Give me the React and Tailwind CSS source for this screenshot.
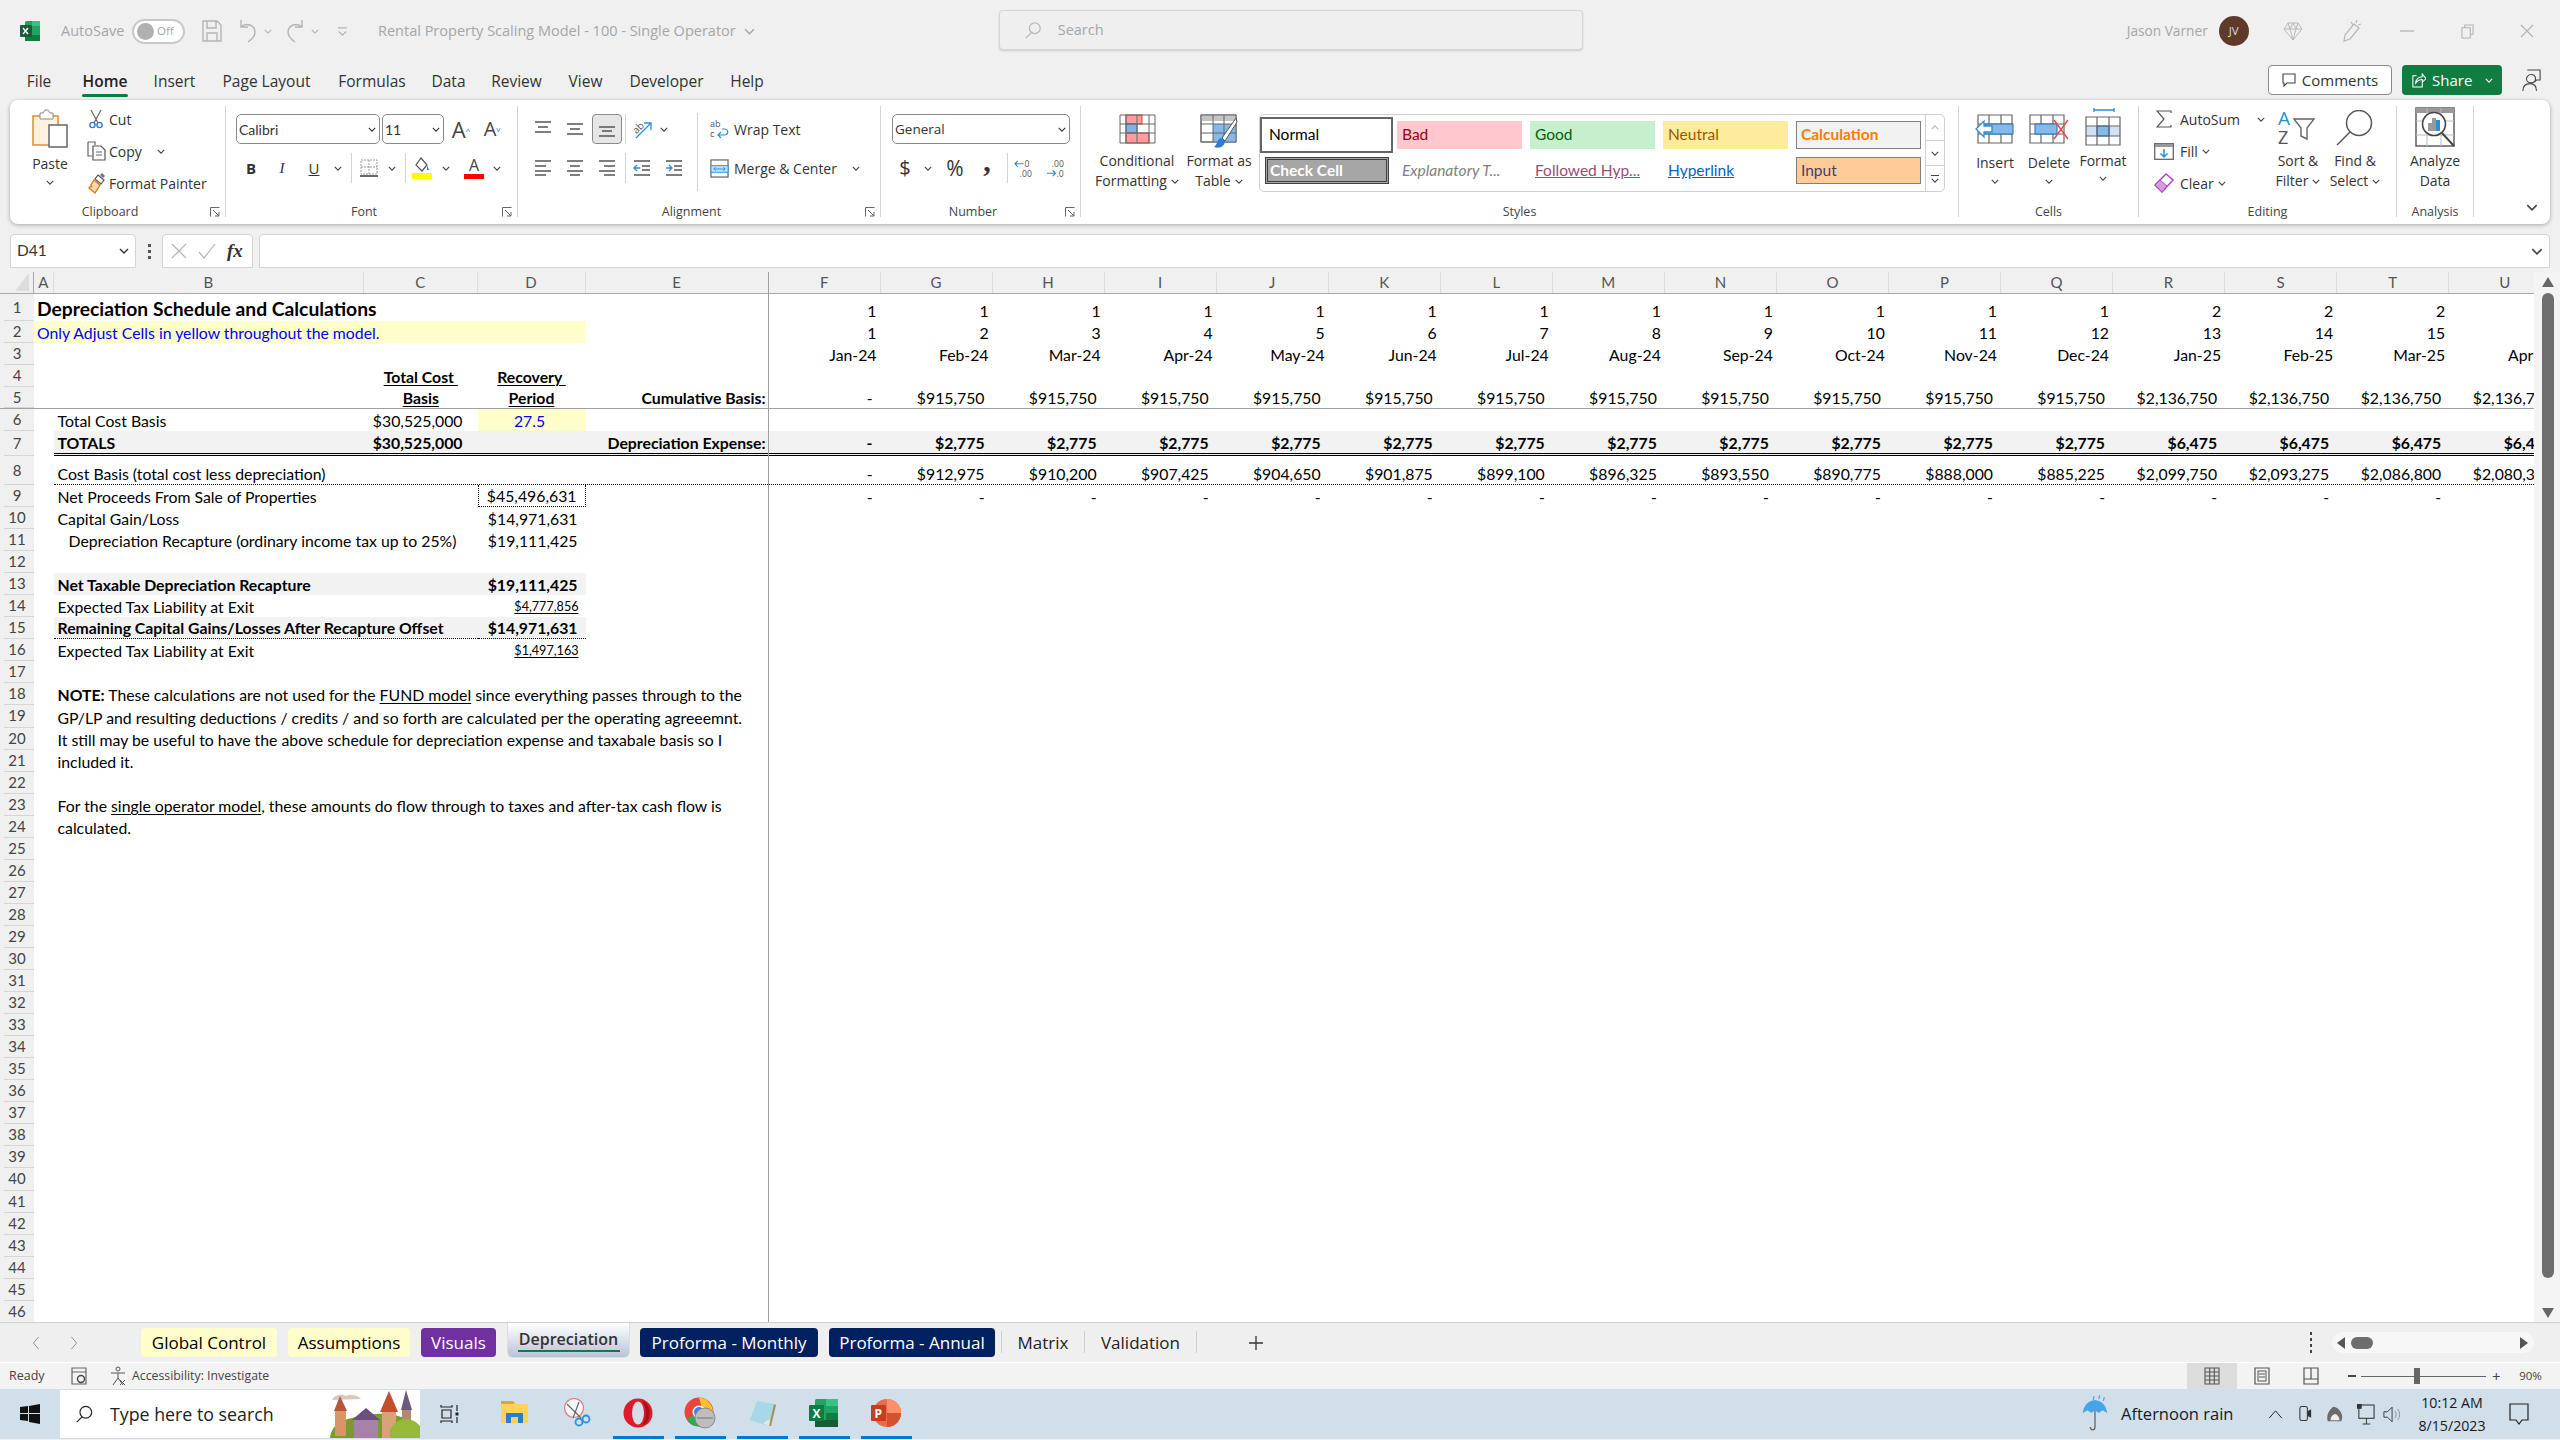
import React from "react";

const Chev = ({ c = "#444", className = "" }) => (
  <svg viewBox="0 0 10 6" className={`w-[8px] h-[5px] shrink-0 ${className}`}><path d="M1 1l4 4 4-4" fill="none" stroke={c} strokeWidth="1.4" /></svg>
);
const Launcher = () => (
  <svg viewBox="0 0 10 10" className="w-[10px] h-[10px] mr-[5px] shrink-0"><path d="M.5 9.5V.5h9M3 3l6 6M9 5v4H5" fill="none" stroke="#666" strokeWidth="1" /></svg>
);
const VSep = ({ className = "h-[30px]" }) => <div className={`w-px bg-[#d4d4d4] shrink-0 ${className}`} />;

const IPaste = () => (
  <svg viewBox="0 0 36 40" className="w-[36px] h-[40px]">
    <rect x="1" y="7" width="25" height="29" fill="#fff3dd" stroke="#e8912d" strokeWidth="1.6" />
    <path d="M8 7V4h3l2-3h3l2 3h3v6H8z" fill="#fff" stroke="#888" />
    <rect x="17" y="16" width="18" height="22" fill="#fff" stroke="#666" strokeWidth="1.5" />
  </svg>
);
const ICut = () => (
  <svg viewBox="0 0 16 20" className="w-[16px] h-[20px]">
    <path d="M3 1l7 13M13 1L6 14" stroke="#666" strokeWidth="1.2" fill="none" />
    <circle cx="4.5" cy="16" r="2.6" fill="none" stroke="#2b7cd3" strokeWidth="1.4" />
    <circle cx="11.5" cy="16" r="2.6" fill="none" stroke="#2b7cd3" strokeWidth="1.4" />
  </svg>
);
const ICopy = () => (
  <svg viewBox="0 0 20 20" className="w-[20px] h-[20px]">
    <path d="M1 1h7v3M1 1v14h4" fill="none" stroke="#666" strokeWidth="1.2" />
    <path d="M6 5h8l4 4v10H6z" fill="#fff" stroke="#555" strokeWidth="1.2" />
    <path d="M9 11h6M9 14h6" stroke="#666" />
  </svg>
);
const IPainter = () => (
  <svg viewBox="0 0 20 22" className="w-[20px] h-[22px]">
    <path d="M11 3l6 5-3 4-6-5z" fill="#fff" stroke="#555" strokeWidth="1.2" />
    <path d="M15 1l3 3-2 2-3-3z" fill="#777" />
    <path d="M7 8l6 5-5 8-6-5 2-2 1 1-1-2z" fill="#fbd9b0" stroke="#e07a1e" strokeWidth="1.4" />
  </svg>
);
const ICond = () => (
  <svg viewBox="0 0 37 30" className="w-[37px] h-[30px]">
    <rect x="1" y="1" width="35" height="28" fill="#fff" />
    <rect x="7" y="1" width="16" height="9" fill="#ff9c9c" stroke="#d24242" />
    <rect x="7" y="10" width="11" height="9" fill="#7fb4e6" stroke="#2d7ac4" />
    <rect x="7" y="19" width="23" height="10" fill="#ff9c9c" stroke="#d24242" />
    <path d="M1 1h35v28H1zM7 1v28M18 1v28M30 1v28M1 10h35M1 19h35" fill="none" stroke="#666" strokeWidth="1" />
  </svg>
);
const ITable = () => (
  <svg viewBox="0 0 38 36" className="w-[38px] h-[36px]">
    <rect x="1" y="1" width="35" height="27" fill="#fff" stroke="#666" />
    <rect x="1" y="1" width="35" height="6" fill="#c4c4c4" />
    <rect x="13" y="10" width="23" height="18" fill="#84b9ea" />
    <path d="M1 1h35v27H1zM13 1v27M24 1v27M1 10h35M1 19h35" fill="none" stroke="#666" />
    <path d="M36 4L22 24l3 3L37 8z" fill="#fff" stroke="#555" />
    <path d="M21 24c-4 1-3 6-7 9 6 2 11-1 11-6z" fill="#2b7cd3" />
  </svg>
);
const IInsert = () => (
  <svg viewBox="0 0 40 30" className="w-[40px] h-[30px]">
    <path d="M3 1h34v28H3zM14 1v28M26 1v28M3 10h34M3 20h34" fill="none" stroke="#666" strokeWidth="1.2" />
    <rect x="10" y="10" width="28" height="10" fill="#84b9ea" stroke="#1f6fba" />
    <path d="M1 15l8-8v5h8v6H9v5z" fill="#fff" stroke="#2b8fd6" strokeWidth="1.3" />
  </svg>
);
const IDelete = () => (
  <svg viewBox="0 0 42 30" className="w-[42px] h-[30px]">
    <path d="M2 1h34v28H2zM13 1v28M25 1v28M2 10h34M2 20h34" fill="none" stroke="#666" strokeWidth="1.2" />
    <rect x="7" y="10" width="22" height="10" fill="#84b9ea" stroke="#1f6fba" />
    <path d="M26 6l14 19M40 6L26 25" stroke="#e84b4b" strokeWidth="1.5" />
  </svg>
);
const IFormat = () => (
  <svg viewBox="0 0 38 38" className="w-[38px] h-[38px]">
    <path d="M10 2h20M10 0v4M30 0v4" stroke="#2b8fd6" strokeWidth="1.3" />
    <rect x="2" y="18" width="34" height="10" fill="#84b9ea66" />
    <rect x="13" y="18" width="12" height="10" fill="#84b9ea" stroke="#1f6fba" />
    <path d="M2 9h34v28H2zM13 9v28M25 9v28M2 18h34M2 28h34" fill="none" stroke="#666" strokeWidth="1.2" />
  </svg>
);
const ISigma = () => (
  <svg viewBox="0 0 16 18" className="w-[16px] h-[18px]"><path d="M15 3V1H1l7 8-7 8h14v-2" fill="none" stroke="#555" strokeWidth="1.2" /></svg>
);
const IFill = () => (
  <svg viewBox="0 0 20 17" className="w-[20px] h-[17px]">
    <rect x=".7" y=".7" width="18.6" height="15.6" fill="#fff" stroke="#666" strokeWidth="1.3" />
    <rect x="1" y="1" width="18" height="3" fill="#999" />
    <path d="M10 6v8M6.5 10.5L10 14l3.5-3.5" fill="none" stroke="#2b8fd6" strokeWidth="1.5" />
  </svg>
);
const IClear = () => (
  <svg viewBox="0 0 20 20" className="w-[20px] h-[20px]">
    <path d="M1 12L12 1l7 6L8 19z" fill="#fff" stroke="#a64bc0" strokeWidth="1.5" />
    <path d="M1 12l5-5 7 6-5 6z" fill="#d29adf" stroke="#a64bc0" strokeWidth="1" />
  </svg>
);
const ISort = () => (
  <svg viewBox="0 0 42 40" className="w-[42px] h-[40px]">
    <text x="1" y="16" fontSize="19" fill="#2b8fd6" fontFamily="Open Sans">A</text>
    <text x="1" y="35" fontSize="18" fill="#555" fontFamily="Open Sans">Z</text>
    <path d="M17 10h20l-7 9v11l-6-3v-8z" fill="#fff" stroke="#666" strokeWidth="1.4" />
  </svg>
);
const IFind = () => (
  <svg viewBox="0 0 40 38" className="w-[40px] h-[38px]">
    <circle cx="24" cy="13" r="12.5" fill="none" stroke="#555" strokeWidth="1.5" />
    <path d="M15 22L2 35" stroke="#555" strokeWidth="1.5" />
  </svg>
);
const IAnalyze = () => (
  <svg viewBox="0 0 44 44" className="w-[44px] h-[44px]">
    <rect x="1" y="1" width="38" height="38" fill="#fff" stroke="#555" strokeWidth="1.4" />
    <rect x="1" y="1" width="38" height="5" fill="#999" />
    <path d="M1 14h38M1 28h38M12 1v38M26 1v38" stroke="#bbb" />
    <circle cx="19" cy="17" r="11.5" fill="#fff" stroke="#444" strokeWidth="1.6" />
    <rect x="13" y="16" width="4" height="8" fill="#999" />
    <rect x="17" y="11" width="4" height="13" fill="#999" />
    <rect x="21" y="13" width="4" height="11" fill="#2b8fd6" />
    <path d="M27 26l12 13" stroke="#444" strokeWidth="2" />
  </svg>
);

function Group({ w, label, launcher, children }) {
  return (
    <div className={`flex shrink-0 ${w}`}>
      <div className="flex-1 min-w-0 flex flex-col">
        <div className="h-[98px] flex">{children}</div>
        <div className="h-[16px] flex items-center text-[#444] text-[12.5px] leading-none">
          <div className="flex-1 text-center">{label}</div>
          {launcher && <Launcher />}
        </div>
      </div>
      <VSep className="h-[111px]" />
    </div>
  );
}

const SmallRow = ({ icon, text, chev, cw = "w-[22px]", gap = "ml-[6px]" }) => (
  <div className="h-[28px] flex items-center text-[#333] text-[14px] whitespace-nowrap">
    <div className={`${cw} flex justify-start shrink-0`}>{icon}</div>
    <span>{text}</span>
    {chev && <Chev className={gap} />}
  </div>
);

const LargeBtn = ({ w, icon, lines, chevLast, box = "h-[45px] pt-[8px]" }) => (
  <div className={`${w} shrink-0 flex flex-col items-center text-[#333] text-[14px] leading-[20px] whitespace-nowrap`}>
    <div className={`${box} flex items-start justify-center`}>{icon}</div>
    {lines.map((l, i) => (
      <div key={i} className="flex items-center">
        {l}
        {chevLast && i === lines.length - 1 && <Chev className="ml-[4px] w-[7px]" />}
      </div>
    ))}
  </div>
);

const CellBtn = ({ icon, label, box = "h-[47px] pt-[8px]", top = "mt-[6px]" }) => (
  <div className="w-[54px] shrink-0 flex flex-col items-center text-[#333] text-[14px] leading-[20px]">
    <div className={`${box} flex items-start justify-center`}>{icon}</div>
    <span>{label}</span>
    <Chev className={top} />
  </div>
);

const Combo = ({ w, text, cal }) => (
  <div className={`${w} h-[30px] border border-[#8a8a8a] rounded-[5px] bg-white flex items-center justify-between pl-[2px] pr-[3px] shrink-0 text-[#333] ${cal ? "font-['Lato',sans-serif] text-[14px]" : "text-[13.5px]"}`}>
    <span>{text}</span><Chev c="#333" />
  </div>
);

function TitleBar() {
  return (
    <div className="h-[62px] flex items-center text-[#a6a6a6] text-[14.5px] shrink-0">
      <svg viewBox="0 0 20 20" className="w-[20px] h-[20px] ml-[20px] shrink-0">
        <rect x="5" y="0" width="15" height="20" rx="1.5" fill="#21a366" />
        <rect x="12" y="0" width="8" height="5" fill="#33c481" />
        <rect x="5" y="14" width="15" height="6" fill="#107c41" />
        <rect x="0" y="4" width="12" height="12" rx="1" fill="#185c37" />
        <path d="M3 7l5 6M8 7l-5 6" stroke="#fff" strokeWidth="1.4" />
      </svg>
      <span className="ml-[21px] w-[71px] whitespace-nowrap">AutoSave</span>
      <div className="w-[53px] h-[25px] rounded-full border-2 border-[#c8c8c8] flex items-center pl-[3px] gap-[3px] bg-white shrink-0">
        <div className="w-[17px] h-[17px] rounded-full bg-[#b0b0b0]" />
        <span className="text-[11.5px] leading-none">Off</span>
      </div>
      <svg viewBox="0 0 20 22" className="w-[20px] h-[22px] ml-[17px] shrink-0"><path d="M1 1h14l4 4v16H1zM5 1v7h9V1M5 21v-8h10v8" fill="none" stroke="#b4b4b4" strokeWidth="1.4" /></svg>
      <svg viewBox="0 0 20 24" className="w-[20px] h-[24px] ml-[16px] shrink-0"><path d="M3 1v7h7M3 8c5-5 14-2 14 5 0 5-4 8-7 10" fill="none" stroke="#b4b4b4" strokeWidth="1.4" /></svg>
      <Chev c="#b4b4b4" className="ml-[6px]" />
      <svg viewBox="0 0 20 24" className="w-[20px] h-[24px] ml-[13px] shrink-0"><path d="M17 1v7h-7M17 8C12 3 3 6 3 13c0 5 4 8 7 10" fill="none" stroke="#b4b4b4" strokeWidth="1.4" /></svg>
      <Chev c="#b4b4b4" className="ml-[6px]" />
      <svg viewBox="0 0 12 12" className="w-[11px] h-[11px] ml-[18px] shrink-0"><path d="M1 2h10M2 6l4 4 4-4" fill="none" stroke="#b4b4b4" strokeWidth="1.2" /></svg>
      <span className="ml-[30px] whitespace-nowrap">Rental Property Scaling Model - 100 - Single Operator</span>
      <Chev c="#a6a6a6" className="ml-[8px] w-[11px] h-[7px]" />
      <div className="ml-[244px] w-[584px] h-[40px] -mt-[2px] rounded-[4px] border border-[#d6d6d6] shadow-[0_1px_2px_rgba(0,0,0,.15)] bg-[#efefef] flex items-center shrink-0">
        <svg viewBox="0 0 20 20" className="w-[18px] h-[18px] ml-[24px]"><circle cx="12" cy="8" r="6" fill="none" stroke="#b8b8b8" strokeWidth="1.4" /><path d="M8 13l-6 6" stroke="#b8b8b8" strokeWidth="1.4" /></svg>
        <span className="ml-[16px]">Search</span>
      </div>
      <span className="ml-[544px] w-[100px] whitespace-nowrap text-[13.7px]">Jason Varner</span>
      <div className="ml-[-8px] w-[30px] h-[30px] rounded-full bg-[#5f3a2b] text-[#ddd] text-[11.5px] flex items-center justify-center shrink-0">JV</div>
      <svg viewBox="0 0 20 20" className="w-[20px] h-[20px] ml-[34px] shrink-0"><path d="M5 2h10l4 6-9 11L1 8zM1 8h18M7 8l3 11 3-11M5 2l2 6 3-6 3 6 2-6" fill="none" stroke="#b8b8b8" strokeWidth="1" /></svg>
      <svg viewBox="0 0 20 24" className="w-[20px] h-[24px] ml-[39px] shrink-0"><path d="M12 5L3 16l-1 6 6-2 9-11zM9 3l2 3M15 1l-1 3M19 5l-3 1" fill="none" stroke="#b8b8b8" strokeWidth="1.2" /></svg>
      <svg viewBox="0 0 14 2" className="w-[14px] h-[2px] ml-[38px] shrink-0"><path d="M0 1h14" stroke="#b4b4b4" strokeWidth="1.3" /></svg>
      <svg viewBox="0 0 14 16" className="w-[13px] h-[15px] ml-[47px] shrink-0"><path d="M1 4h9v11H1zM4 4V1h9v10h-3" fill="none" stroke="#b4b4b4" strokeWidth="1.2" /></svg>
      <svg viewBox="0 0 14 14" className="w-[14px] h-[14px] ml-[46px] shrink-0"><path d="M1 1l12 12M13 1L1 13" stroke="#b4b4b4" strokeWidth="1.2" /></svg>
    </div>
  );
}

function TabRow() {
  const tabs = [["File", "w-[60px]", ""], ["Home", "w-[72px]", "a"], ["Insert", "w-[67px]", ""], ["Page Layout", "w-[117px]", ""], ["Formulas", "w-[94px]", ""], ["Data", "w-[59px]", ""], ["Review", "w-[77px]", ""], ["View", "w-[61px]", ""], ["Developer", "w-[101px]", ""], ["Help", "w-[60px]", ""]];
  return (
    <div className="h-[38px] flex text-[#333] text-[15.5px] shrink-0">
      <div className="ml-[9px] flex">
        {tabs.map(([t, w, a]) => (
          <div key={t} className={`${w} flex flex-col items-center justify-start pt-[8px] shrink-0 ${a ? "font-semibold text-[#222]" : ""}`}>
            <span className="leading-[22px]">{t}</span>
            {a && <div className="w-[46px] h-[3px] rounded-full bg-[#107c41] mt-[2px]" />}
          </div>
        ))}
      </div>
      <div className="flex-1" />
      <div className="w-[124px] h-[30px] mt-[3px] border border-[#8a8a8a] rounded-[4px] bg-white flex items-center justify-center gap-[6px] text-[15px] shrink-0">
        <svg viewBox="0 0 14 14" className="w-[14px] h-[14px]"><path d="M1 1h12v9H5l-3 3v-3H1z" fill="none" stroke="#444" strokeWidth="1.1" /></svg>Comments
      </div>
      <div className="w-[100px] h-[30px] mt-[3px] ml-[10px] rounded-[4px] bg-[#107c41] text-white flex items-center pl-[9px] gap-[6px] text-[15px] font-medium shrink-0">
        <svg viewBox="0 0 16 16" className="w-[15px] h-[15px]"><path d="M6 3H2v12h10v-5M5 11c0-4 3-7 7-7V1l4 5-4 4V7c-3 0-5 1-7 4z" fill="none" stroke="#fff" strokeWidth="1.1" /></svg>
        <span>Share</span><Chev c="#fff" className="ml-[7px] w-[7px]" />
      </div>
      <svg viewBox="0 0 22 26" className="w-[20px] h-[24px] mt-[6px] ml-[19px] mr-[19px] shrink-0"><path d="M7 2h14v11h-4l-2 2M11 7c3 0 5 2 5 5s-2 4-5 4-5-2-5-4 2-5 5-5zM2 25c0-5 3-8 8-8s7 3 7 8" fill="none" stroke="#444" strokeWidth="1.2" /></svg>
    </div>
  );
}

const Al = ({ d }) => <svg viewBox="0 0 18 18" className="w-[18px] h-[18px]"><path d={d} stroke="#555" strokeWidth="1.5" fill="none" /></svg>;

function Ribbon() {
  return (
    <div className="mx-[10px] h-[124px] shrink-0 bg-white rounded-[8px] shadow-[0_1px_4px_rgba(0,0,0,.3)] pt-[6px] flex text-[#333]">
      <Group w="w-[216px]" label="Clipboard" launcher>
        <div className="ml-[3px] w-[74px] flex flex-col items-center text-[14px] pt-[3px] shrink-0">
          <IPaste />
          <span className="mt-[5px] leading-[20px]">Paste</span>
          <Chev className="mt-[6px]" />
        </div>
        <div className="flex flex-col gap-[4px] -mt-[1px]">
          <SmallRow icon={<div className="pl-[1px]"><ICut /></div>} text="Cut" />
          <SmallRow icon={<ICopy />} text="Copy" chev gap="ml-[15px]" />
          <SmallRow icon={<IPainter />} text="Format Painter" />
        </div>
      </Group>
      <Group w="w-[292px]" label="Font" launcher>
        <div className="flex flex-col pl-[10px] pt-[8px]">
          <div className="flex items-center">
            <Combo w="w-[144px]" text="Calibri" cal />
            <div className="w-[2px]" />
            <Combo w="w-[62px]" text="11" cal />
            <span className="w-[34px] text-center text-[22px] leading-none text-[#444]">A<sup className="text-[8px] text-[#2b7cd3]">^</sup></span>
            <span className="w-[28px] text-center text-[20px] leading-none text-[#444]">A<sup className="text-[8px] text-[#2b7cd3]">v</sup></span>
          </div>
          <div className="flex items-center h-[30px] mt-[9px]">
            <span className="w-[30px] text-center font-bold text-[15px]">B</span>
            <span className="w-[32px] text-center italic font-['Liberation_Serif',serif] text-[15px]">I</span>
            <span className="w-[32px] text-center underline text-[15px]">U</span>
            <div className="w-[16px] flex justify-center"><Chev /></div>
            <div className="w-[5px]" /><VSep />
            <div className="w-[34px] flex justify-center">
              <svg viewBox="0 0 18 18" className="w-[18px] h-[18px]"><path d="M1 1h16v14H1zM9 1v14M1 8h16" fill="none" stroke="#999" strokeDasharray="2 1" /><path d="M0 17h18" stroke="#444" strokeWidth="1.6" /></svg>
            </div>
            <div className="w-[12px] flex justify-center"><Chev /></div>
            <div className="w-[7px]" /><VSep />
            <div className="w-[32px] flex justify-center">
              <svg viewBox="0 0 20 22" className="w-[20px] h-[22px]"><path d="M9 1l6 7-5 6-6-6z" fill="#fff" stroke="#555" strokeWidth="1.2" /><path d="M15 8l2 5h-2z" fill="#2b7cd3" /><rect x="0" y="16" width="20" height="6" fill="#ffff00" /></svg>
            </div>
            <div className="w-[16px] flex justify-center"><Chev /></div>
            <div className="w-[40px] flex justify-center">
              <div className="flex flex-col items-center w-[20px] leading-none text-[16px] text-[#444]">A<div className="w-[20px] h-[5px] bg-[#ff0000] mt-[1px]" /></div>
            </div>
            <div className="w-[6px] flex justify-center"><Chev /></div>
          </div>
        </div>
      </Group>
      <Group w="w-[363px]" label="Alignment" launcher>
        <div className="w-[179px] flex flex-col pt-[8px] shrink-0">
          <div className="h-[30px] flex items-center pl-[9px]">
            <div className="w-[32px] flex justify-center"><Al d="M1 2h16M4 7h10M1 12h16" /></div>
            <div className="w-[32px] flex justify-center"><Al d="M1 4h16M4 9h10M1 14h16" /></div>
            <div className="w-[30px] ml-[1px] h-[30px] bg-[#e6e6e6] border border-[#8a8a8a] rounded-[4px] flex items-center justify-center"><Al d="M1 7h16M4 11h10M1 16h16" /></div>
            <VSep className="h-[30px] ml-[3px]" />
            <div className="w-[32px] ml-[1px] flex justify-center">
              <svg viewBox="0 0 22 22" className="w-[22px] h-[22px]"><text x="1" y="12" fontSize="10" fill="#555" fontFamily="Open Sans" transform="rotate(-45 8 10)">ab</text><path d="M4 20L18 6M12 5h7v7" stroke="#2b8fd6" strokeWidth="1.3" fill="none" /></svg>
            </div>
            <div className="w-[10px] flex justify-center"><Chev /></div>
          </div>
          <div className="h-[30px] mt-[9px] flex items-center pl-[9px]">
            <div className="w-[32px] flex justify-center"><Al d="M1 2h16M1 7h11M1 12h16M1 16h11" /></div>
            <div className="w-[32px] flex justify-center"><Al d="M1 2h16M4 7h10M1 12h16M4 16h10" /></div>
            <div className="w-[32px] flex justify-center"><Al d="M1 2h16M6 7h11M1 12h16M6 16h11" /></div>
            <VSep className="h-[30px] ml-[2px]" />
            <div className="w-[32px] flex justify-center">
              <svg viewBox="0 0 18 18" className="w-[18px] h-[18px]"><path d="M1 2h16M9 7h8M9 11h8M1 16h16" stroke="#555" strokeWidth="1.3" /><path d="M1 9h6M4 6L1 9l3 3" stroke="#2b8fd6" strokeWidth="1.3" fill="none" /></svg>
            </div>
            <div className="w-[32px] flex justify-center">
              <svg viewBox="0 0 18 18" className="w-[18px] h-[18px]"><path d="M1 2h16M9 7h8M9 11h8M1 16h16" stroke="#555" strokeWidth="1.3" /><path d="M1 9h6M4 6l3 3-3 3" stroke="#2b8fd6" strokeWidth="1.3" fill="none" /></svg>
            </div>
          </div>
        </div>
        <VSep className="h-[78px] mt-[7px]" />
        <div className="flex flex-col pt-[8px] text-[14px] whitespace-nowrap">
          <div className="h-[30px] flex items-center pl-[12px]">
            <div className="w-[24px] flex justify-start">
              <svg viewBox="0 0 20 20" className="w-[20px] h-[20px]"><text x="0" y="8" fontSize="9" fill="#555" fontFamily="Open Sans">ab</text><text x="0" y="18" fontSize="9" fill="#555" fontFamily="Open Sans">c</text><path d="M9 16h5c5 0 5-6 0-6h-2M11 13l-3 3 3 3" fill="none" stroke="#2b8fd6" strokeWidth="1.2" /></svg>
            </div>
            <span>Wrap Text</span>
          </div>
          <div className="h-[30px] mt-[9px] flex items-center pl-[12px]">
            <div className="w-[24px] flex justify-start">
              <svg viewBox="0 0 20 20" className="w-[19px] h-[19px]"><rect x="1" y="1" width="18" height="18" fill="#fff" stroke="#666" strokeWidth="1.3" /><rect x="1" y="7" width="18" height="7" fill="#bfe0f7" stroke="#2b8fd6" /><path d="M4 10.5h12M6 8.5l-2 2 2 2M14 8.5l2 2-2 2" fill="none" stroke="#2b8fd6" /></svg>
            </div>
            <span>Merge &amp; Center</span>
            <Chev className="ml-[15px]" />
          </div>
        </div>
      </Group>
      <Group w="w-[200px]" label="Number" launcher>
        <div className="flex flex-col pl-[11px] pt-[8px]">
          <Combo w="w-[178px]" text="General" />
          <div className="flex items-center h-[30px] mt-[9px]">
            <span className="w-[26px] text-center text-[20px] leading-none">$</span>
            <div className="w-[24px] flex justify-center -ml-[2px]"><Chev /></div>
            <span className="w-[30px] text-center text-[21px] leading-none">%</span>
            <span className="w-[34px] text-center text-[30px] font-bold font-['Liberation_Serif',serif] leading-none -mt-[14px]">,</span>
            <div className="w-[3px]" /><VSep />
            <div className="w-[32px] flex justify-center">
              <svg viewBox="0 0 22 22" className="w-[21px] h-[21px]"><text x="11" y="9" fontSize="9" fill="#555" fontFamily="Open Sans">0</text><text x="6" y="20" fontSize="9" fill="#555" fontFamily="Open Sans">.00</text><path d="M1 6h9M4 3L1 6l3 3" stroke="#2b8fd6" fill="none" strokeWidth="1.2" /></svg>
            </div>
            <div className="w-[32px] flex justify-center">
              <svg viewBox="0 0 22 22" className="w-[21px] h-[21px]"><text x="6" y="9" fontSize="9" fill="#555" fontFamily="Open Sans">.00</text><text x="11" y="20" fontSize="9" fill="#555" fontFamily="Open Sans">.0</text><path d="M1 16h9M7 13l3 3-3 3" stroke="#2b8fd6" fill="none" strokeWidth="1.2" /></svg>
            </div>
          </div>
        </div>
      </Group>
      <Group w="w-[878px]" label="Styles">
        <div className="flex ml-[14px]">
          <LargeBtn w="w-[84px]" icon={<ICond />} lines={["Conditional", "Formatting"]} chevLast />
          <LargeBtn w="w-[80px]" icon={<ITable />} lines={["Format as", "Table"]} chevLast />
        </div>
        <div className="w-[686px] h-[78px] mt-[8px] border border-[#d0d0d0] rounded-[5px] flex shrink-0 font-['Lato',sans-serif] text-[15.5px]">
          <div className="flex-1 min-w-0 flex flex-col">
            <div className="flex h-[36px] mt-[2px] items-center">
              <div className="w-[133px] h-[36px] border-2 border-[#666] text-black flex items-center pl-[7px] shrink-0">Normal</div>
              <div className="w-[125px] h-[28px] ml-[4px] bg-[#ffc7ce] text-[#9c0006] flex items-center pl-[5px] shrink-0">Bad</div>
              <div className="w-[125px] h-[28px] ml-[8px] bg-[#c6efce] text-[#006100] flex items-center pl-[5px] shrink-0">Good</div>
              <div className="w-[125px] h-[28px] ml-[8px] bg-[#ffeb9c] text-[#9c5700] flex items-center pl-[5px] shrink-0">Neutral</div>
              <div className="w-[125px] h-[28px] ml-[8px] bg-[#f2f2f2] border border-[#7f7f7f] text-[#fa7d00] font-bold flex items-center pl-[4px] shrink-0">Calculation</div>
            </div>
            <div className="flex h-[27px] mt-[4px]">
              <div className="w-[124px] ml-[5px] bg-[#a5a5a5] border-[3px] border-double border-[#3f3f3f] text-white font-bold flex items-center pl-[2px] shrink-0">Check Cell</div>
              <div className="w-[125px] ml-[8px] text-[#7f7f7f] italic flex items-center pl-[5px] shrink-0 whitespace-nowrap">Explanatory T...</div>
              <div className="w-[125px] ml-[8px] text-[#954f72] underline flex items-center pl-[5px] shrink-0 whitespace-nowrap">Followed Hyp...</div>
              <div className="w-[125px] ml-[8px] text-[#0563c1] underline flex items-center pl-[5px] shrink-0">Hyperlink</div>
              <div className="w-[125px] ml-[8px] bg-[#ffcc99] border border-[#7f7f7f] text-[#3f3f76] flex items-center pl-[4px] shrink-0">Input</div>
            </div>
          </div>
          <div className="w-[19px] border-l border-[#d0d0d0] flex flex-col shrink-0">
            <div className="h-[26px] flex items-center justify-center border-b border-[#d0d0d0]"><Chev c="#bbb" className="rotate-180" /></div>
            <div className="h-[25px] flex items-center justify-center border-b border-[#d0d0d0]"><Chev /></div>
            <div className="flex-1 flex flex-col items-center justify-center gap-[2px]"><div className="w-[8px] h-px bg-[#444]" /><Chev /></div>
          </div>
        </div>
      </Group>
      <Group w="w-[180px]" label="Cells">
        <div className="flex ml-[9px]">
          <CellBtn icon={<IInsert />} label="Insert" />
          <CellBtn icon={<IDelete />} label="Delete" />
          <CellBtn icon={<IFormat />} label="Format" box="h-[45px] pt-[2px]" top="mt-[5px]" />
        </div>
      </Group>
      <Group w="w-[258px]" label="Editing">
        <div className="ml-[15px] w-[116px] flex flex-col gap-[4px] shrink-0 -mt-[1px]">
          <SmallRow icon={<div className="pl-[2px]"><ISigma /></div>} text="AutoSum" chev cw="w-[26px]" gap="ml-[17px]" />
          <SmallRow icon={<IFill />} text="Fill" chev cw="w-[26px]" gap="ml-[4px]" />
          <SmallRow icon={<IClear />} text="Clear" chev cw="w-[26px]" gap="ml-[4px]" />
        </div>
        <LargeBtn w="w-[56px]" icon={<ISort />} box="h-[45px] pt-[3px]" lines={["Sort &", "Filter"]} chevLast />
        <LargeBtn w="w-[58px]" icon={<IFind />} box="h-[45px] pt-[4px]" lines={["Find &", "Select"]} chevLast />
      </Group>
      <Group w="w-[77px]" label="Analysis">
        <LargeBtn w="w-[76px]" icon={<div className="pl-[4px]"><IAnalyze /></div>} box="h-[45px] pt-[1px]" lines={["Analyze", "Data"]} />
      </Group>
      <div className="flex-1 flex items-end justify-end pb-[13px] pr-[12px]">
        <Chev className="w-[12px] h-[7px]" />
      </div>
    </div>
  );
}

function FormulaBar() {
  return (
    <div className="h-[34px] mt-[10px] mx-[10px] flex shrink-0 text-[#333]">
      <div className="w-[126px] bg-white border border-[#d4d4d4] rounded-t-[4px] flex items-center justify-between px-[6px] font-['Lato',sans-serif] text-[15.5px] shrink-0">
        <span>D41</span><Chev c="#333" className="w-[10px] h-[6px]" />
      </div>
      <div className="w-[26px] flex flex-col items-center justify-center gap-[3px] shrink-0">
        <div className="w-[3px] h-[3px] bg-[#555]" /><div className="w-[3px] h-[3px] bg-[#555]" /><div className="w-[3px] h-[3px] bg-[#555]" />
      </div>
      <div className="w-[91px] bg-white border border-[#d4d4d4] rounded-t-[4px] flex items-center pl-[8px] gap-[11px] shrink-0">
        <svg viewBox="0 0 16 16" className="w-[16px] h-[16px]"><path d="M1 1l14 14M15 1L1 15" stroke="#b4b4b4" strokeWidth="1.2" /></svg>
        <svg viewBox="0 0 18 16" className="w-[18px] h-[16px]"><path d="M1 9l5 6L17 1" stroke="#b4b4b4" strokeWidth="1.2" fill="none" /></svg>
        <span className="italic font-bold font-['Liberation_Serif',serif] text-[19px] text-[#333]">fx</span>
      </div>
      <div className="flex-1 ml-[6px] bg-white border border-[#d4d4d4] rounded-t-[4px] flex items-center justify-end pr-[6px]">
        <Chev c="#444" className="w-[12px] h-[7px]" />
      </div>
    </div>
  );
}

const cal = "font-['Lato',sans-serif] text-[15.8px] text-black";
const months = ["Jan-24","Feb-24","Mar-24","Apr-24","May-24","Jun-24","Jul-24","Aug-24","Sep-24","Oct-24","Nov-24","Dec-24","Jan-25","Feb-25","Mar-25","Apr-25"];
const rowH = { 1: "h-[27px]", 2: "h-[22px]", 3: "h-[22px]", 4: "h-[22px]", 5: "h-[22px]", 6: "h-[22px]", 7: "h-[25px]", 8: "h-[29px]" };
const rowsAll = Array.from({ length: 46 }, (_, i) => i + 1);
const hOf = (n) => rowH[n] || "h-[22.05px]";

const RowHead = ({ n }) => (
  <div className="w-[34px] shrink-0 bg-[#f0f0f0] pl-[4px] h-full">
    <div className="h-full border-b border-[#d6d6d6] flex items-center justify-center pr-[4px] font-['Lato',sans-serif] text-[15px] text-[#444] leading-none">{n}</div>
  </div>
);

const A = "w-[19.5px]", B = "w-[310.5px]", C = "w-[113.5px]", D = "w-[108px]", E = "w-[182px]";
const BC = "w-[424px]";
const Tx = ({ w, className = "", children }) => (
  <div className={`${w} shrink-0 flex items-end whitespace-nowrap leading-[20px] h-full ${className}`}>{children}</div>
);
const Rt = ({ w, className = "pr-[8px]", children }) => (
  <Tx w={w} className={`justify-end ${className}`}>{children}</Tx>
);
const Und = ({ children }) => <span className="underline underline-offset-2 decoration-1">{children}</span>;

function LeftRow({ n }) {
  let body = null;
  let rowBorder = "";
  const a = <Tx w={A} />;
  switch (n) {
    case 1:
      body = <Tx w="w-[500px]" className="font-bold text-[19.3px] pl-[3px] leading-[24px]">Depreciation Schedule and Calculations</Tx>;
      break;
    case 2:
      body = <Tx w="w-[551.5px]" className="bg-[#ffffcc] text-[#0000ff] pl-[3px]">Only Adjust Cells in yellow throughout the model.</Tx>;
      break;
    case 4:
      body = <>{a}<Tx w={B} /><Tx w={C} className="justify-center font-bold"><Und>{"Total Cost\u00a0"}</Und></Tx><Tx w={D} className="justify-center font-bold"><Und>{"Recovery\u00a0"}</Und></Tx></>;
      break;
    case 5:
      rowBorder = "border-b border-[#a0a0a0]";
      body = <>{a}<Tx w={B} /><Tx w={C} className="justify-center font-bold"><Und>Basis</Und></Tx><Tx w={D} className="justify-center font-bold"><Und>Period</Und></Tx><Rt w={E} className="pr-[2px] font-bold">Cumulative Basis:</Rt></>;
      break;
    case 6:
      body = <>{a}<Tx w={B} className="pl-[4px]">Total Cost Basis</Tx><Rt w={C} className="pr-[15px]">$30,525,000</Rt><Tx w={D} className="justify-center bg-[#ffffcc] text-[#0000ff] pr-[4px]">27.5</Tx></>;
      break;
    case 7:
      body = <><Tx w={B} className="pl-[4px] font-bold">TOTALS</Tx><Rt w={C} className="pr-[15px] font-bold">$30,525,000</Rt><Tx w={D} /><Rt w={E} className="pr-[2px] font-bold">Depreciation Expense:</Rt></>;
      break;
    case 8:
      body = <Tx w={B} className="pl-[4px]">Cost Basis (total cost less depreciation)</Tx>;
      break;
    case 9:
      body = <>{a}<Tx w={B} className="pl-[4px]">Net Proceeds From Sale of Properties</Tx><Tx w={C} /><Rt w={D} className="pr-[8px] border-x border-b border-dotted border-black">$45,496,631</Rt></>;
      break;
    case 10:
      body = <>{a}<Tx w={B} className="pl-[4px]">Capital Gain/Loss</Tx><Tx w={C} /><Rt w={D}>$14,971,631</Rt></>;
      break;
    case 11:
      body = <>{a}<Tx w={B} className="pl-[15px]">Depreciation Recapture (ordinary income tax up to 25%)</Tx><Tx w={C} /><Rt w={D}>$19,111,425</Rt></>;
      break;
    case 13:
      body = <>{a}<Tx w={BC} className="pl-[4px] font-bold bg-[#f2f2f2]">Net Taxable Depreciation Recapture</Tx><Rt w={D} className="pr-[8px] font-bold bg-[#f2f2f2]">$19,111,425</Rt></>;
      break;
    case 14:
      body = <>{a}<Tx w={B} className="pl-[4px]">Expected Tax Liability at Exit</Tx><Tx w={C} /><Rt w={D} className="pr-[7px] text-[12.6px]"><Und>$4,777,856</Und></Rt></>;
      break;
    case 15:
      body = <>{a}<Tx w={BC} className="pl-[4px] font-bold bg-[#f2f2f2] border-b border-dotted border-black">Remaining Capital Gains/Losses After Recapture Offset</Tx><Rt w={D} className="pr-[8px] font-bold bg-[#f2f2f2] border-b border-dotted border-black">$14,971,631</Rt></>;
      break;
    case 16:
      body = <>{a}<Tx w={B} className="pl-[4px]">Expected Tax Liability at Exit</Tx><Tx w={C} /><Rt w={D} className="pr-[7px] text-[12.6px]"><Und>$1,497,163</Und></Rt></>;
      break;
    case 18:
      body = <>{a}<Tx w={B} className="pl-[4px]"><b>NOTE:</b>&nbsp;These calculations are not used for the&nbsp;<Und>FUND model</Und>&nbsp;since everything passes through to the</Tx></>;
      break;
    case 19:
      body = <>{a}<Tx w={B} className="pl-[4px]">GP/LP and resulting deductions / credits / and so forth are calculated per the operating agreeemnt.</Tx></>;
      break;
    case 20:
      body = <>{a}<Tx w={B} className="pl-[4px]">It still may be useful to have the above schedule for depreciation expense and taxabale basis so I</Tx></>;
      break;
    case 21:
      body = <>{a}<Tx w={B} className="pl-[4px]">included it.</Tx></>;
      break;
    case 23:
      body = <>{a}<Tx w={B} className="pl-[4px]">For the&nbsp;<Und>single operator model</Und>, these amounts do flow through to taxes and after-tax cash flow is</Tx></>;
      break;
    case 24:
      body = <>{a}<Tx w={B} className="pl-[4px]">calculated.</Tx></>;
      break;
    default:
  }
  const band = n === 7 ? "border-b-[3px] border-double border-black ml-[19.5px] bg-[#f2f2f2]" : n === 8 ? "border-b border-dotted border-black ml-[19.5px]" : "";
  return (
    <div className={`flex ${hOf(n)} ${rowBorder}`}>
      <RowHead n={n} />
      <div className={`flex-1 min-w-0 flex h-full ${band}`}>{body}</div>
    </div>
  );
}

const colLetters = ["F","G","H","I","J","K","L","M","N","O","P","Q","R","S","T","U"];
const row1 = colLetters.map((_, i) => (i < 12 ? "1" : "2"));
const row2 = colLetters.map((_, i) => String(i + 1));
const row5 = colLetters.map((_, i) => (i === 0 ? "-" : i < 12 ? "$915,750" : "$2,136,750"));
const row7 = colLetters.map((_, i) => (i === 0 ? "-" : i < 12 ? "$2,775" : "$6,475"));
const row8 = ["-","$912,975","$910,200","$907,425","$904,650","$901,875","$899,100","$896,325","$893,550","$890,775","$888,000","$885,225","$2,099,750","$2,093,275","$2,086,800","$2,080,325"];
const row9 = colLetters.map(() => "-");

const DataRow = ({ n, vals, pr, bold, className = "" }) => (
  <div className={`flex ${hOf(n)} ${className}`}>
    {vals ? vals.map((v, i) => (
      <div key={i} className={`${i === 0 ? "w-[111.5px]" : "w-[112.05px]"} shrink-0 h-full flex items-end justify-end whitespace-nowrap leading-[20px] ${pr} ${bold ? "font-bold" : ""}`}>{v}</div>
    )) : null}
  </div>
);

function RightRow({ n }) {
  switch (n) {
    case 1: return <DataRow n={n} vals={row1} pr="pr-[4px]" />;
    case 2: return <DataRow n={n} vals={row2} pr="pr-[4px]" />;
    case 3: return <DataRow n={n} vals={months} pr="pr-[4px]" />;
    case 5: return <DataRow n={n} vals={row5} pr="pr-[8px]" className="border-b border-[#a0a0a0]" />;
    case 7: return <DataRow n={n} vals={row7} pr="pr-[8px]" bold className="bg-[#f2f2f2] border-b-[3px] border-double border-black" />;
    case 8: return <DataRow n={n} vals={row8} pr="pr-[8px]" className="border-b border-dotted border-black" />;
    case 9: return <DataRow n={n} vals={row9} pr="pr-[8px]" />;
    default: return <DataRow n={n} />;
  }
}

const ColHead = ({ w, t, b = true }) => (
  <div className={`${w} shrink-0 h-full flex items-center justify-center font-['Lato',sans-serif] text-[15px] text-[#555] ${b ? "border-r border-[#dcdcdc]" : ""}`}>{t}</div>
);

function Sheet() {
  return (
    <div className={`h-[1051px] shrink-0 mt-[4px] flex overflow-hidden border-b border-[#d0d0d0] bg-white ${cal}`}>
      <div className="w-[769px] shrink-0 border-r border-[#a0a0a0]">
        <div className="h-[22px] flex bg-[#f0f0f0] border-b border-[#a8a8a8]">
          <div className="w-[34px] shrink-0 h-full flex justify-end items-end border-r border-[#a8a8a8] pr-[4px] pb-[2px]">
            <svg viewBox="0 0 14 18" className="w-[14px] h-[18px]"><path d="M14 0v18H0z" fill="#dcdcdc" /></svg>
          </div>
          <ColHead w="w-[19.5px]" t="A" />
          <ColHead w="w-[310.5px]" t="B" />
          <ColHead w="w-[113.5px]" t="C" />
          <ColHead w="w-[108px]" t="D" />
          <ColHead w="w-[182px]" t="E" b={false} />
        </div>
        {rowsAll.map((n) => <LeftRow key={n} n={n} />)}
      </div>
      <div className="w-[1765px] shrink-0 overflow-hidden">
        <div className="h-[22px] flex bg-[#f0f0f0] border-b border-[#a8a8a8]">
          {colLetters.map((l, i) => <ColHead key={l} w={i === 0 ? "w-[111.5px]" : "w-[112.05px]"} t={l} />)}
        </div>
        {rowsAll.map((n) => <RightRow key={n} n={n} />)}
      </div>
      <div className="flex-1 bg-[#f4f4f4] flex flex-col items-center pl-[2px]">
        <svg viewBox="0 0 12 10" className="w-[12px] h-[10px] mt-[5px] shrink-0"><path d="M6 0l6 10H0z" fill="#666" /></svg>
        <div className="w-[12px] h-[985px] mt-[6px] rounded-full bg-[#6e6e6e] shrink-0" />
        <div className="flex-1" />
        <svg viewBox="0 0 12 10" className="w-[12px] h-[10px] mb-[4px] shrink-0"><path d="M6 10l6-10H0z" fill="#666" /></svg>
      </div>
    </div>
  );
}

const SheetTab = ({ w, cls, t, ml = "ml-[11px]" }) => (
  <div className={`${w} ${ml} h-[29px] mt-[5px] rounded-[4px] flex items-center justify-center shrink-0 ${cls}`}>{t}</div>
);
const TabSep = ({ className = "" }) => <div className={`w-px h-[22px] mt-[8px] bg-[#cfcfcf] shrink-0 ${className}`} />;

function TabBar() {
  return (
    <div className="h-[39px] flex bg-[#efefef] text-[17px] text-[#222] shrink-0 font-['Open_Sans',sans-serif]">
      <div className="w-[141px] shrink-0 flex items-center pl-[32px] gap-[30px]">
        <svg viewBox="0 0 8 16" className="w-[8px] h-[14px]"><path d="M7 1L1 8l6 7" fill="none" stroke="#888" strokeWidth="1" /></svg>
        <svg viewBox="0 0 8 16" className="w-[8px] h-[14px]"><path d="M1 1l6 7-6 7" fill="none" stroke="#888" strokeWidth="1" /></svg>
      </div>
      <SheetTab w="w-[136px]" ml="ml-0" cls="bg-[#ffffcc] text-black" t="Global Control" />
      <SheetTab w="w-[122px]" cls="bg-[#ffffcc] text-black" t="Assumptions" />
      <SheetTab w="w-[75px]" cls="bg-[#7030a0] text-white" t="Visuals" />
      <div className="w-[123px] h-[35px] ml-[11px] rounded-b-[6px] bg-gradient-to-b from-white to-[#b9c3d7] border-x border-b border-[#dddddd] flex flex-col items-center justify-center shrink-0 font-semibold text-[#333] text-[16px]">
        <span className="leading-[20px]">Depreciation</span>
        <div className="w-[102px] h-[2px] bg-[#107c41] mt-[1px]" />
      </div>
      <SheetTab w="w-[178px]" cls="bg-[#002060] text-white" t="Proforma - Monthly" ml="ml-[10px]" />
      <SheetTab w="w-[166px]" cls="bg-[#002060] text-white" t="Proforma - Annual" />
      <TabSep className="ml-[6px]" />
      <div className="w-[82px] flex items-center justify-center shrink-0">Matrix</div>
      <TabSep />
      <div className="w-[111px] flex items-center justify-center shrink-0">Validation</div>
      <TabSep />
      <div className="ml-[52px] w-[16px] flex items-center shrink-0">
        <svg viewBox="0 0 16 16" className="w-[14px] h-[14px]"><path d="M8 0v16M0 8h16" stroke="#333" strokeWidth="1.5" /></svg>
      </div>
      <div className="flex-1" />
      <div className="flex flex-col justify-center gap-[3px] mr-[20px]">
        <div className="w-[2px] h-[3px] bg-[#444]" /><div className="w-[2px] h-[3px] bg-[#444]" /><div className="w-[2px] h-[3px] bg-[#444]" /><div className="w-[2px] h-[3px] bg-[#444]" />
      </div>
      <div className="w-[202px] h-[21px] mt-[9px] mr-[26px] rounded-full bg-[#f7f7f7] flex items-center pl-[5px] shrink-0">
        <svg viewBox="0 0 8 12" className="w-[8px] h-[12px]"><path d="M8 0v12L0 6z" fill="#555" /></svg>
        <div className="w-[22px] h-[12px] rounded-full bg-[#6e6e6e] ml-[6px]" />
        <div className="flex-1" />
        <svg viewBox="0 0 8 12" className="w-[8px] h-[12px] mr-[6px]"><path d="M0 0v12l8-6z" fill="#555" /></svg>
      </div>
    </div>
  );
}

function StatusBar() {
  return (
    <div className="h-[27px] flex items-center bg-[#f3f3f3] border-t border-white text-[12.5px] text-[#444] shrink-0">
      <span className="ml-[9px] w-[62px]">Ready</span>
      <svg viewBox="0 0 16 18" className="w-[16px] h-[18px] shrink-0"><path d="M1 1h14v16H1zM1 5h14" fill="none" stroke="#666" strokeWidth="1.2" /><circle cx="10" cy="12" r="3.5" fill="none" stroke="#444" strokeWidth="1.4" /></svg>
      <svg viewBox="0 0 18 20" className="w-[18px] h-[20px] ml-[22px] shrink-0"><circle cx="9" cy="3" r="2" fill="none" stroke="#555" /><path d="M2 7h14M9 7v5M9 12l-5 7M9 12l5 7M11 14l5 5M16 14l-5 5" fill="none" stroke="#555" /></svg>
      <span className="ml-[5px] whitespace-nowrap text-[12.3px]">Accessibility: Investigate</span>
      <div className="flex-1" />
      <div className="w-[50px] h-full bg-[#dcdcdc] flex items-center justify-center shrink-0">
        <svg viewBox="0 0 16 18" className="w-[16px] h-[18px]"><path d="M1 1h14v16H1zM1 5h14M1 9h14M1 13h14M5.7 1v16M10.3 1v16" fill="none" stroke="#555" strokeWidth="1.1" /></svg>
      </div>
      <div className="w-[50px] flex items-center justify-center shrink-0">
        <svg viewBox="0 0 16 18" className="w-[16px] h-[18px]"><path d="M1 1h14v16H1z" fill="none" stroke="#555" strokeWidth="1.2" /><rect x="4" y="4" width="8" height="10" fill="none" stroke="#555" /><path d="M5 7h6M5 10h6" stroke="#555" /></svg>
      </div>
      <div className="w-[48px] flex items-center justify-center shrink-0">
        <svg viewBox="0 0 16 18" className="w-[16px] h-[18px]"><path d="M1 1h14v16H1zM1 12h14M8 1v11" fill="none" stroke="#555" strokeWidth="1.2" /></svg>
      </div>
      <div className="w-[8px] h-[1.5px] bg-[#444] ml-[13px] shrink-0" />
      <div className="w-[125px] ml-[5px] flex items-center shrink-0">
        <div className="w-[53px] h-px bg-[#666]" />
        <div className="w-[6px] h-[16px] bg-[#666] shrink-0" />
        <div className="flex-1 h-px bg-[#666]" />
      </div>
      <span className="ml-[6px] w-[9px] text-[15px] leading-none">+</span>
      <span className="w-[59px] text-center text-[11.5px] whitespace-nowrap">90%</span>
    </div>
  );
}

const Underline = () => <div className="w-[51px] h-[3px] bg-[#0078d4] mt-auto" />;

function Castle() {
  return (
    <svg viewBox="0 0 90 48" className="w-[90px] h-[48px] shrink-0">
      <rect width="90" height="48" fill="#fff" />
      <path d="M2 10c3-6 10-6 14-4 4-2 12-1 15 3z" fill="#d9c9bd" />
      <path d="M0 48c2-14 12-18 22-20 14-4 36-6 46-2 10 2 18 10 22 22z" fill="#7a9b2f" />
      <rect x="5" y="20" width="11" height="26" fill="#d89567" />
      <path d="M4 21L10 6l7 15z" fill="#b6563a" />
      <rect x="52" y="20" width="14" height="28" fill="#d9a37a" />
      <path d="M50 22L59 1l9 21z" fill="#c44f2c" />
      <rect x="72" y="18" width="9" height="30" fill="#b08a70" />
      <path d="M71 20L76 0l6 20z" fill="#6c5a7a" />
      <rect x="24" y="28" width="24" height="20" fill="#a782a6" />
      <path d="M22 30l14-12 14 12z" fill="#6a4f80" />
      <path d="M60 40c6-14 22-14 30-4v12H60z" fill="#96b93a" />
    </svg>
  );
}

const TaskSlot = ({ children, under }) => (
  <div className="w-[62px] h-full flex flex-col items-center shrink-0">
    <div className="h-[47px] flex items-center justify-center">{children}</div>
    {under && <Underline />}
  </div>
);

function Taskbar() {
  return (
    <div className="h-[50px] shrink-0 bg-[#d0dfea] flex text-[#1a1a1a] font-['Open_Sans',sans-serif]">
      <div className="w-[60px] flex items-center justify-center shrink-0">
        <svg viewBox="0 0 20 20" className="w-[20px] h-[20px] -ml-[1px]"><path d="M0 3l8-1v7H0zM9 2l11-2v9H9zM0 10h8v7l-8-1zM9 10h11v10l-11-2z" fill="#111" /></svg>
      </div>
      <div className="w-[360px] h-[48px] mt-[1px] bg-white flex items-center shrink-0">
        <svg viewBox="0 0 20 20" className="w-[18px] h-[20px] ml-[15px] shrink-0"><circle cx="12" cy="8" r="6.5" fill="none" stroke="#222" strokeWidth="1.3" /><path d="M8 13l-6 6" stroke="#222" strokeWidth="1.3" /></svg>
        <span className="ml-[17px] whitespace-nowrap text-[#222] text-[17.8px]">Type here to search</span>
        <div className="flex-1" />
        <Castle />
      </div>
      <div className="w-[63px] h-full flex items-center justify-center shrink-0">
        <svg viewBox="0 0 20 20" className="w-[20px] h-[20px] -ml-[3px]"><path d="M1 1v2h11V1M1 19v-2h11v2M2 6h9v8H2zM17 1v6M17 13v6" fill="none" stroke="#222" strokeWidth="1.2" /><rect x="15.5" y="8.5" width="3" height="3" fill="#222" /></svg>
      </div>
      <TaskSlot>
        <svg viewBox="0 0 27 23" className="w-[27px] h-[23px]"><path d="M0 1a1 1 0 0 1 1-1h11l3 3h11a1 1 0 0 1 1 1v18H0z" fill="#ffd35a" /><path d="M0 0h12l2 3H0z" fill="#e0a526" /><path d="M5 22V12h17v10h-5v-6h-7v6z" fill="#2b7cd3" /></svg>
      </TaskSlot>
      <TaskSlot>
        <svg viewBox="0 0 30 30" className="w-[30px] h-[30px]"><circle cx="13" cy="10" r="9.5" fill="#f8f8f8" stroke="#e07a7a" strokeWidth="1.2" /><path d="M6 6l14 14M18 4L12 20" stroke="#666" strokeWidth="1.2" /><circle cx="18" cy="24" r="3.5" fill="none" stroke="#2b8fd6" strokeWidth="1.8" /><circle cx="25" cy="21" r="3.5" fill="none" stroke="#2b8fd6" strokeWidth="1.8" /></svg>
      </TaskSlot>
      <TaskSlot under>
        <svg viewBox="0 0 30 30" className="w-[30px] h-[30px]"><circle cx="15" cy="15" r="14.5" fill="#e0192b" /><ellipse cx="15" cy="15" rx="6" ry="11.5" fill="#d0dfea" /><path d="M22 4c6 5 6 17 0 22l-3 1c5-5 5-19 0-24z" fill="#a70f1e" /></svg>
      </TaskSlot>
      <TaskSlot under>
        <svg viewBox="0 0 32 32" className="w-[32px] h-[32px]"><circle cx="15" cy="15" r="14.5" fill="#e9453a" /><path d="M15 15L2.5 22a14.5 14.5 0 0 0 14 7.5z" fill="#34a853" /><path d="M15 .5A14.5 14.5 0 0 1 28 20l-9-5z" fill="#fbc02d" /><circle cx="15" cy="15" r="6.5" fill="#fff" /><circle cx="15" cy="15" r="5" fill="#3b82f6" /><circle cx="21" cy="21" r="10" fill="#bdbdbd" stroke="#8a8a8a" /><path d="M13 21h16" stroke="#777" /></svg>
      </TaskSlot>
      <TaskSlot under>
        <svg viewBox="0 0 28 28" className="w-[28px] h-[28px]"><path d="M9 2l17 3-5 22L2 21z" fill="#a9d6e8" stroke="#8fb" strokeWidth=".3" /><path d="M21 27l5-22 2 1-5 21z" fill="#a88f58" /><path d="M21 27l-6-3 7-4z" fill="#e6e6e6" /></svg>
      </TaskSlot>
      <TaskSlot under>
        <svg viewBox="0 0 30 28" className="w-[30px] h-[28px]"><rect x="6" y="0" width="23" height="28" rx="1.5" fill="#21a366" /><rect x="17" y="0" width="12" height="7" fill="#33c481" /><rect x="17" y="14" width="12" height="7" fill="#107c41" /><rect x="6" y="21" width="23" height="7" fill="#185c37" /><rect x="0" y="6" width="15" height="16" rx="1" fill="#107c41" /><text x="3.5" y="18.5" fontSize="12" fontWeight="700" fill="#fff" fontFamily="Open Sans">X</text></svg>
      </TaskSlot>
      <TaskSlot under>
        <svg viewBox="0 0 30 28" className="w-[30px] h-[28px]"><circle cx="16" cy="14" r="14" fill="#ed6c47" /><path d="M16 0a14 14 0 0 1 14 14H16z" fill="#ff8f6b" /><path d="M16 28a14 14 0 0 0 14-14H16z" fill="#d35230" /><rect x="0" y="6" width="15" height="16" rx="1" fill="#c43e1c" /><text x="3.5" y="18.5" fontSize="12" fontWeight="700" fill="#fff" fontFamily="Open Sans">P</text></svg>
      </TaskSlot>
      <div className="flex-1" />
      <div className="flex items-center shrink-0">
        <svg viewBox="0 0 30 40" className="w-[28px] h-[38px]"><path d="M2 19C3 10 8 6 15 5c7 1 12 5 13 14l-5-3-4 3-4-3-4 3-4-3z" fill="#45a5e8" /><path d="M15 16v18c0 4-5 4-5 0" fill="none" stroke="#666" strokeWidth="1.4" /><path d="M14 1l-1 4M20 0l-1 4M25 2l-1 4" stroke="#45a5e8" strokeWidth="1.3" /></svg>
        <span className="ml-[12px] w-[115px] whitespace-nowrap text-[16.5px]">Afternoon rain</span>
        <svg viewBox="0 0 16 10" className="w-[15px] h-[9px] ml-[32px]"><path d="M1 9l7-8 7 8" fill="none" stroke="#222" strokeWidth="1.1" /></svg>
        <svg viewBox="0 0 16 22" className="w-[15px] h-[22px] ml-[15px]"><rect x="2" y="3" width="8" height="15" rx="2" fill="none" stroke="#333" strokeWidth="1.1" /><path d="M10 8l4-2v9l-4-2" fill="#333" /></svg>
        <svg viewBox="0 0 20 20" className="w-[18px] h-[18px] ml-[13px]"><path d="M2 18c-2-6 1-12 6-16 5 0 10 6 10 12l-1 4z" fill="#6b6b6b" /><path d="M5 17c0-4 2-6 5-7 3 1 5 3 5 7z" fill="#eee" /></svg>
        <svg viewBox="0 0 20 24" className="w-[19px] h-[23px] ml-[12px]"><rect x="3" y="2" width="16" height="14" fill="none" stroke="#333" strokeWidth="1.1" /><rect x="1" y="1" width="5" height="5" fill="#333" /><path d="M11 16v6M7 22h8" stroke="#333" /></svg>
        <svg viewBox="0 0 22 20" className="w-[20px] h-[19px] ml-[8px]"><path d="M1 7h4l5-5v16l-5-5H1z" fill="none" stroke="#333" strokeWidth="1" /><path d="M13 6c2 2 2 6 0 8M16 4c3 3 3 9 0 12" fill="none" stroke="#888" /></svg>
        <div className="ml-[1px] w-[96px] flex flex-col items-center text-[14.2px] leading-[23px] whitespace-nowrap"><span>10:12 AM</span><span>8/15/2023</span></div>
        <svg viewBox="0 0 20 22" className="w-[20px] h-[22px] ml-[9px] mr-[31px]"><path d="M1 1h18v16h-6l-3 4-3-4H1z" fill="none" stroke="#222" strokeWidth="1.2" /></svg>
      </div>
    </div>
  );
}

export default function App() {
  return (
    <div className="w-[2560px] h-[1440px] flex flex-col overflow-hidden bg-[#f0f0f0] font-['Open_Sans',sans-serif]">
      <TitleBar />
      <TabRow />
      <Ribbon />
      <FormulaBar />
      <Sheet />
      <TabBar />
      <StatusBar />
      <Taskbar />
    </div>
  );
}
